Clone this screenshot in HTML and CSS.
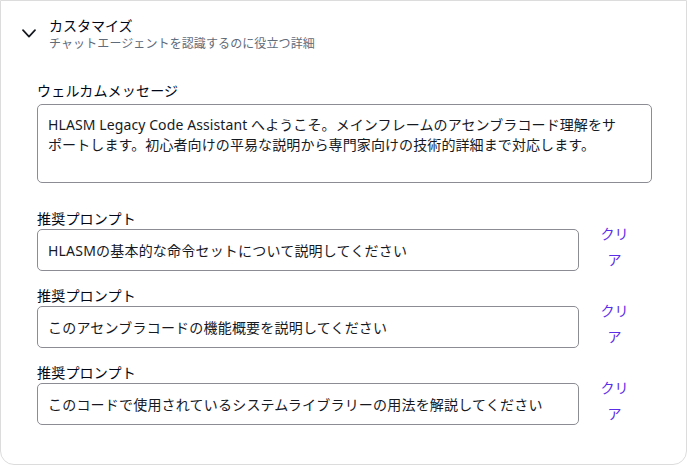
FILE: index.html
```html
<!DOCTYPE html>
<html lang="ja">
<head>
    <meta charset="UTF-8">
    <meta name="viewport" content="width=device-width, initial-scale=1.0">
    <title>カスタマイズ</title>
    <link rel="stylesheet" href="styles.css">
</head>
<body>
    <div class="card">
        <div class="card-header">
            <svg class="chevron" width="14" height="13" viewBox="0 0 14 13">
                <path d="M1 3.2 L7 9.6 L13 3.2" fill="none" stroke="#16191f" stroke-width="1.7" stroke-linecap="round" stroke-linejoin="round"/>
            </svg>
            <div>
                <h2 class="card-title">カスタマイズ</h2>
                <p class="card-subtitle">チャットエージェントを認識するのに役立つ詳細</p>
            </div>
        </div>

        <div class="form">
            <div class="field welcome">
                <label for="welcome">ウェルカムメッセージ</label>
                <textarea id="welcome" class="textarea">HLASM Legacy Code Assistant へようこそ。メインフレームのアセンブラコード理解をサポートします。初心者向けの平易な説明から専門家向けの技術的詳細まで対応します。</textarea>
            </div>

            <div class="field">
                <label for="prompt1">推奨プロンプト</label>
                <div class="prompt-row">
                    <input type="text" id="prompt1" class="input" value="HLASMの基本的な命令セットについて説明してください">
                    <button class="clear-button">クリア</button>
                </div>
            </div>

            <div class="field">
                <label for="prompt2">推奨プロンプト</label>
                <div class="prompt-row">
                    <input type="text" id="prompt2" class="input" value="このアセンブラコードの機能概要を説明してください">
                    <button class="clear-button">クリア</button>
                </div>
            </div>

            <div class="field">
                <label for="prompt3">推奨プロンプト</label>
                <div class="prompt-row">
                    <input type="text" id="prompt3" class="input" value="このコードで使用されているシステムライブラリーの用法を解説してください">
                    <button class="clear-button">クリア</button>
                </div>
            </div>
        </div>
    </div>
</body>
</html>
```

FILE: styles.css
```css
* {
    box-sizing: border-box;
}
body {
    margin: 0;
    background-color: #ffffff;
    font-family: "Noto Sans", "Noto Sans CJK JP", sans-serif;
    color: #000716;
}
.card {
    width: 687px;
    height: 465px;
    border: 1px solid #dcdcdc;
    border-radius: 0 0 14px 14px;
    padding: 15px 36px 0 36px;
}
.card-header {
    display: flex;
    align-items: flex-start;
    gap: 13px;
    margin-left: -15px;
}
.chevron {
    margin-top: 11px;
    flex-shrink: 0;
}
.card-title {
    margin: 0;
    font-size: 14px;
    font-weight: normal;
    line-height: 20px;
    height: 20px;
}
.card-subtitle {
    margin: 0;
    font-size: 12px;
    line-height: 16px;
    height: 16px;
    letter-spacing: 0.1px;
    color: #5f6b7a;
}
.form {
    display: flex;
    flex-direction: column;
    gap: 15px;
    margin-top: 29px;
}
.field {
    display: flex;
    flex-direction: column;
}
.welcome {
    gap: 3px;
    margin-bottom: 11px;
}
label {
    display: block;
    height: 20px;
    font-size: 14px;
    line-height: 20px;
    letter-spacing: 0.2px;
}
.textarea,
.input {
    font-family: "Noto Sans", "Noto Sans CJK JP", sans-serif;
    font-size: 14px;
    letter-spacing: 0.2px;
    color: #16191f;
    border: 1px solid #8c8c94;
    border-radius: 5px;
    padding: 0 10px;
    outline: none;
    background: #ffffff;
}
.textarea {
    width: 615px;
    height: 79px;
    padding-top: 10px;
    padding-right: 30px;
    letter-spacing: 0.1px;
    line-height: 20px;
    resize: none;
}
.prompt-row {
    display: grid;
    grid-template-columns: 1fr 71px;
    grid-template-rows: 42px;
}
.input {
    height: 42px;
    width: 100%;
}
.clear-button {
    align-self: start;
    margin-top: -8px;
    background: none;
    border: none;
    padding: 0 20px;
    font-family: "Noto Sans", "Noto Sans CJK JP", sans-serif;
    font-size: 14px;
    line-height: 26px;
    color: #5b2de8;
    text-align: center;
    cursor: pointer;
}
```
